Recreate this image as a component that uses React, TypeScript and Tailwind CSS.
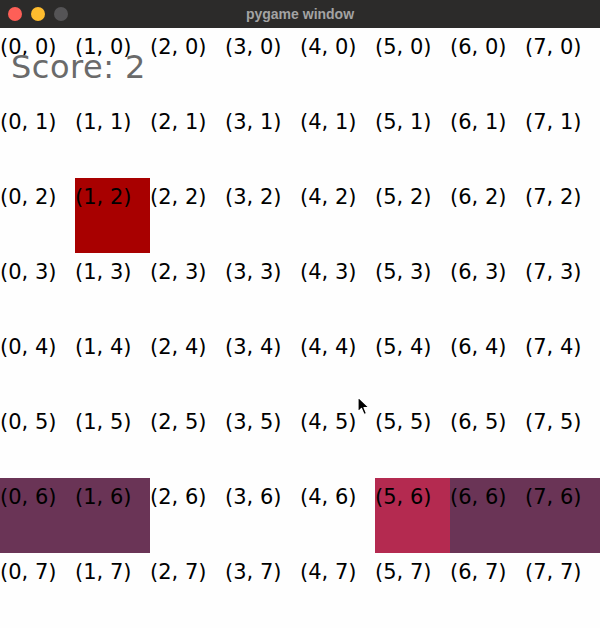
import React from "react"

const N = 8

// filled cells: key "x,y" -> colour
const fills: Record<string, string> = {
  "1,2": "bg-[#a80000]",
  "0,6": "bg-[#6a3456]",
  "1,6": "bg-[#6a3456]",
  "5,6": "bg-[#b42a50]",
  "6,6": "bg-[#6a3456]",
  "7,6": "bg-[#6a3456]",
}

function TitleBar() {
  return (
    <div className="relative flex h-[28px] items-center bg-[#2c2b2a] px-[8px]">
      <div className="flex items-center gap-[9px]">
        <span className="size-[14px] rounded-full bg-[#fe5f57]" />
        <span className="size-[14px] rounded-full bg-[#febc2e]" />
        <span className="size-[14px] rounded-full bg-[#555456]" />
      </div>
      <div className="absolute inset-0 flex items-center justify-center text-[14px] font-bold text-[#a3a3a3] [font-family:'Liberation_Sans',sans-serif]">
        pygame window
      </div>
    </div>
  )
}

function Cursor() {
  return (
    <svg className="absolute left-[357px] top-[368px]" width="14" height="20" viewBox="0 0 14 20">
      <path d="M1 1 L1 16 L4.5 12.5 L7 18.5 L9.5 17.5 L7 11.5 L12 11.5 Z" fill="#000" stroke="#fff" strokeWidth="1.2" strokeLinejoin="round" />
    </svg>
  )
}

export default function App() {
  const cells = []
  for (let y = 0; y < N; y++) {
    for (let x = 0; x < N; x++) {
      const fill = fills[`${x},${y}`] ?? ""
      cells.push(
        <div key={`${x}-${y}`} className={`h-[75px] w-[75px] pt-[6px] ${fill}`}>
          <span className="whitespace-nowrap text-[21px] leading-[26px] text-black">
            ({x}, {y})
          </span>
        </div>
      )
    }
  }

  return (
    <div className="flex h-[628px] w-[600px] flex-col bg-white [font-family:'DejaVu_Sans',sans-serif]">
      <TitleBar />
      <div className="relative grid grid-cols-[repeat(8,75px)] grid-rows-[repeat(8,75px)] bg-[#fefefe]">
        {cells}
        <div className="absolute left-[11px] top-[18px] text-[32px] leading-[42px] tracking-[0.5px] text-[#6a6a6a]">
          Score: 2
        </div>
        <Cursor />
      </div>
    </div>
  )
}
